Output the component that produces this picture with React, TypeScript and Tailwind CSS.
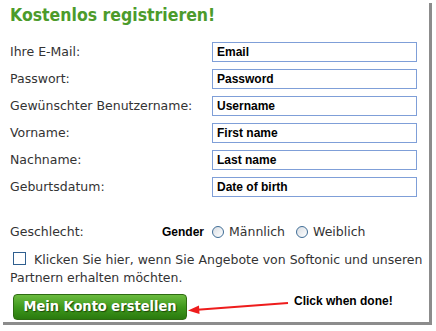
const FIELDS = [
  { label: "Ihre E-Mail:", placeholder: "Email" },
  { label: "Passwort:", placeholder: "Password" },
  { label: "Gewünschter Benutzername:", placeholder: "Username" },
  { label: "Vorname:", placeholder: "First name" },
  { label: "Nachname:", placeholder: "Last name" },
  { label: "Geburtsdatum:", placeholder: "Date of birth" },
];

function Radio() {
  return (
    <span className="inline-block h-[12px] w-[12px] rounded-full border border-[#3f6d96] bg-gradient-to-br from-[#d8dde3] to-white" />
  );
}

export default function App() {
  return (
    <div className="h-[331px] w-[436px] bg-white">
      <div className="relative h-[322px] w-[429px] bg-white pl-[10px] pt-[4px] text-[12.5px] text-[#333] shadow-[3px_3px_0_#8c8c8c] [font-family:'DejaVu_Sans',Verdana,sans-serif]">
        <h1 className="text-[17.5px] font-bold leading-[23px] text-[#4c9b2b] [font-family:'DejaVu_Sans_Condensed','DejaVu_Sans',sans-serif]">
          Kostenlos registrieren!
        </h1>

        <div className="mt-[15px] flex flex-col gap-[7px]">
          {FIELDS.map((f) => (
            <div key={f.label} className="flex h-[20px] items-center">
              <span className="w-[202px]">{f.label}</span>
              <div className="flex h-[20px] w-[205px] items-center border border-[#7f9fd8] px-[4px] text-[12px] font-bold text-black [font-family:'Liberation_Sans',Arial,sans-serif]">
                {f.placeholder}
              </div>
            </div>
          ))}
        </div>

        <div className="mt-[25px] flex h-[20px] items-center">
          <span className="w-[152px]">Geschlecht:</span>
          <span className="mr-[8px] text-[12px] font-bold text-black [font-family:'Liberation_Sans',Arial,sans-serif]">Gender</span>
          <Radio />
          <span className="ml-[5px] mr-[11px]">Männlich</span>
          <Radio />
          <span className="ml-[5px]">Weiblich</span>
        </div>

        <div className="mt-[9px] pr-[4px] leading-[18px]">
          <span className="ml-[3px] mr-[8px] inline-block h-[13px] w-[13px] translate-y-[1px] border border-[#2f5f8f] bg-white" />
          Klicken Sie hier, wenn Sie Angebote von Softonic und unseren Partnern erhalten möchten.
        </div>

        <div className="mt-[7px] flex items-center">
          <button
            type="button"
            className="ml-[3px] h-[26px] w-[174px] rounded-[4px] border border-[#2e6b12] bg-gradient-to-b from-[#6bbb3f] via-[#3f9a1d] to-[#2a7a0e] text-[14.5px] font-bold text-white [font-family:'DejaVu_Sans_Condensed','DejaVu_Sans',sans-serif] [text-shadow:1px_1px_1px_#1c4a08]"
          >
            Mein Konto erstellen
          </button>
          <svg width="102" height="14" viewBox="0 0 102 14" className="ml-[1px]">
            <line x1="6" y1="10" x2="100" y2="3" stroke="#ee1c1c" strokeWidth="2" />
            <polygon points="0,10.5 11,5.5 11.5,14" fill="#ee1c1c" />
          </svg>
          <span className="ml-[4px] -mt-[12px] text-[12px] font-bold text-black [font-family:'Liberation_Sans',Arial,sans-serif]">
            Click when done!
          </span>
        </div>
      </div>
    </div>
  );
}
